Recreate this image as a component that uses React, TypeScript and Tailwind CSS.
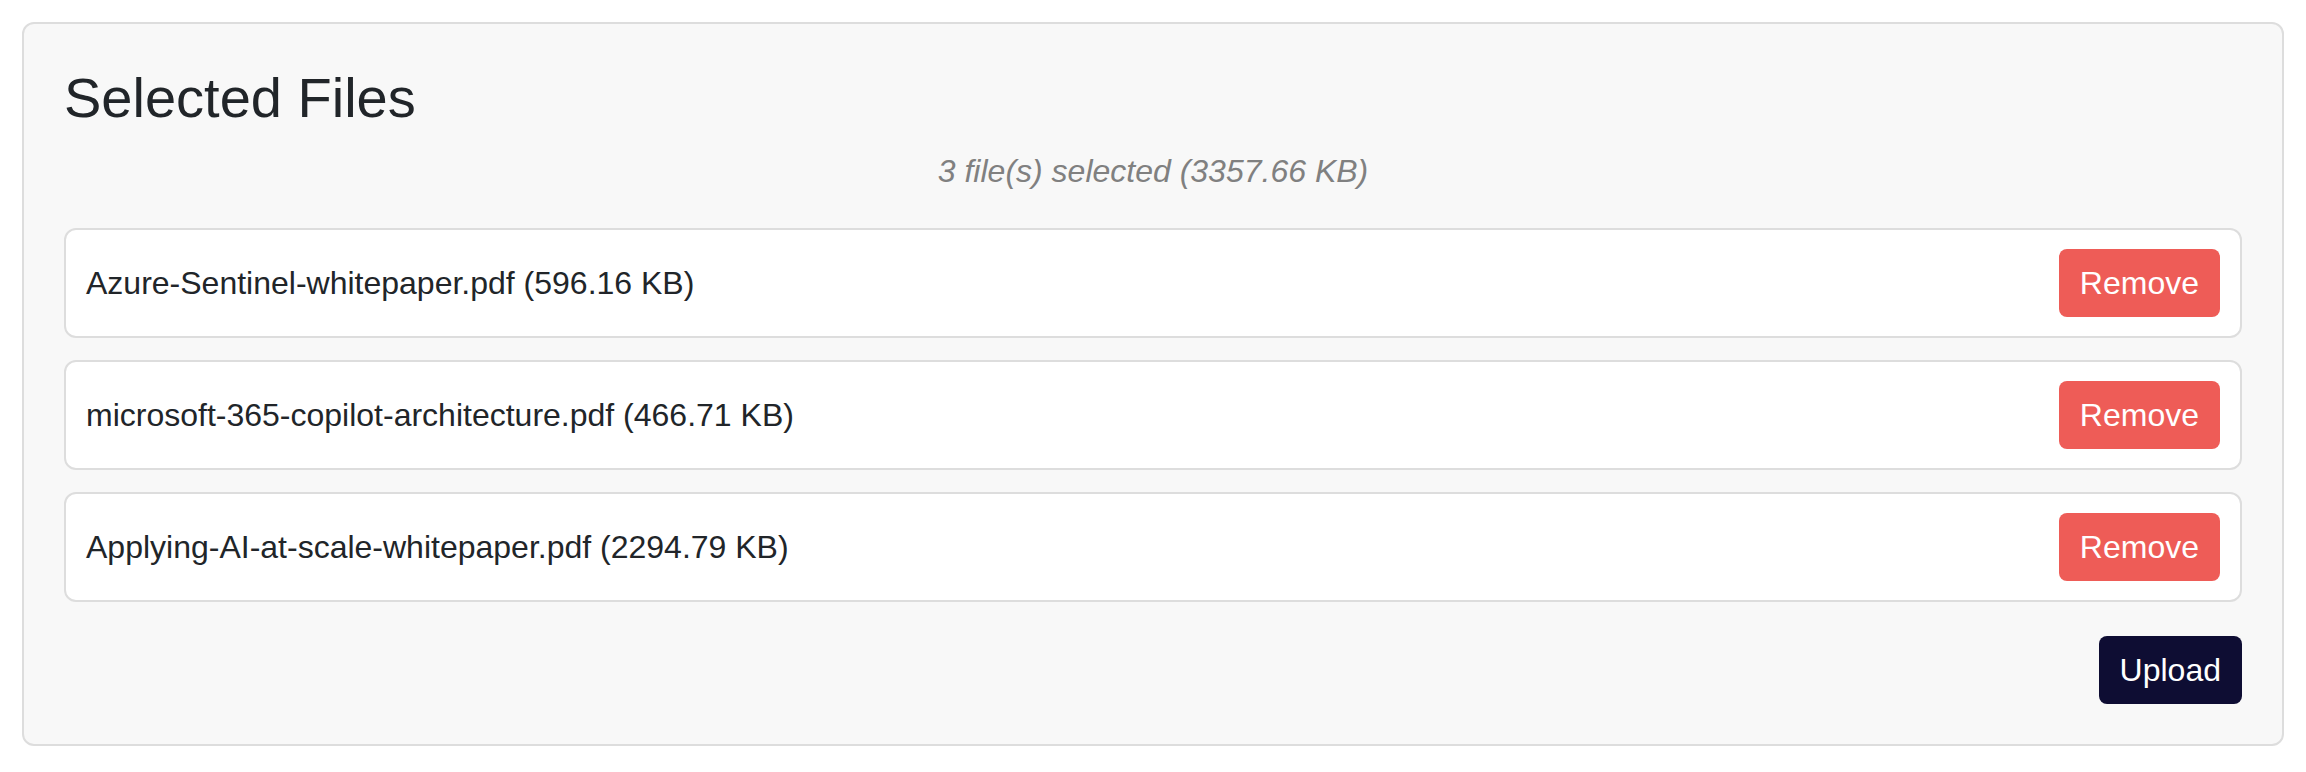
const FILES = [
  { name: "Azure-Sentinel-whitepaper.pdf", size: 596.16 },
  { name: "microsoft-365-copilot-architecture.pdf", size: 466.71 },
  { name: "Applying-AI-at-scale-whitepaper.pdf", size: 2294.79 },
];

function FileRow({ name, size }: { name: string; size: number }) {
  return (
    <div className="flex items-center justify-between bg-white border-2 border-[#dddddd] rounded-[12px] px-[20px] py-[19px]">
      <span className="text-[32px] leading-[48px] text-[#212529]">
        {name} ({size.toFixed(2)} KB)
      </span>
      <button className="bg-[#ee5c57] text-white text-[32px] leading-[48px] px-[21px] py-[10px] rounded-[8px]">
        Remove
      </button>
    </div>
  );
}

export default function App() {
  const total = FILES.reduce((sum, f) => sum + f.size, 0);

  return (
    <div className="min-h-screen bg-white p-[22px] font-['Liberation_Sans',Arial,sans-serif]">
      <div className="bg-[#f8f8f8] border-2 border-[#dddddd] rounded-[12px] p-[40px]">
        <h2 className="text-[56px] leading-[1.2] text-[#212529] mb-[16px]">Selected Files</h2>
        <p className="text-center italic text-[32px] leading-[48px] text-[#808080] mb-[33px]">
          {FILES.length} file(s) selected ({total.toFixed(2)} KB)
        </p>

        {/* File list */}
        <div className="flex flex-col gap-[22px]">
          {FILES.map((f) => (
            <FileRow key={f.name} name={f.name} size={f.size} />
          ))}
        </div>

        <div className="flex justify-end mt-[34px]">
          <button className="bg-[#0e0d33] text-white text-[32px] leading-[48px] px-[21px] py-[10px] rounded-[8px]">
            Upload
          </button>
        </div>
      </div>
    </div>
  );
}
